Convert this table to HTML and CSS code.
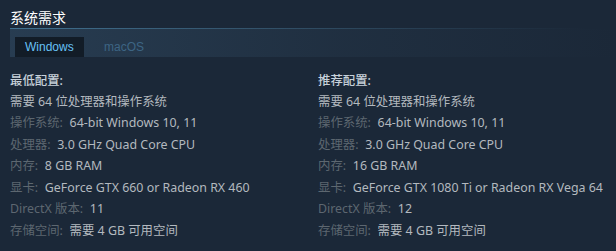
FILE: index.html
```html
<!DOCTYPE html>
<html lang="zh-CN">
<head>
<meta charset="utf-8">
<link rel="stylesheet" href="styles.css">
</head>
<body>
<div class="sysreq">
  <h2 class="title">系统需求</h2>
  <div class="tabs">
    <div class="tab active">Windows</div>
    <div class="tab">macOS</div>
  </div>
  <div class="cols">
    <div class="col">
      <div class="head">最低配置:</div>
      <ul>
        <li>需要 64 位处理器和操作系统</li>
        <li><span class="lb">操作系统:</span> 64-bit Windows 10, 11</li>
        <li><span class="lb">处理器:</span> 3.0 GHz Quad Core CPU</li>
        <li><span class="lb">内存:</span> 8 GB RAM</li>
        <li><span class="lb">显卡:</span> GeForce GTX 660 or Radeon RX 460</li>
        <li><span class="lb">DirectX 版本:</span> 11</li>
        <li><span class="lb">存储空间:</span> 需要 4 GB 可用空间</li>
      </ul>
    </div>
    <div class="col">
      <div class="head">推荐配置:</div>
      <ul>
        <li>需要 64 位处理器和操作系统</li>
        <li><span class="lb">操作系统:</span> 64-bit Windows 10, 11</li>
        <li><span class="lb">处理器:</span> 3.0 GHz Quad Core CPU</li>
        <li><span class="lb">内存:</span> 16 GB RAM</li>
        <li><span class="lb">显卡:</span> GeForce GTX 1080 Ti or Radeon RX Vega 64</li>
        <li><span class="lb">DirectX 版本:</span> 12</li>
        <li><span class="lb">存储空间:</span> 需要 4 GB 可用空间</li>
      </ul>
    </div>
  </div>
</div>
</body>
</html>
```
FILE: styles.css
```css
* { box-sizing: border-box; }
html, body {
  margin: 0;
  padding: 0;
  background: #1b2838;
}
body {
  font-family: "Noto Sans", "Noto Sans CJK SC", sans-serif;
  font-size: 12.4px;
  color: #acb2b8;
  width: 616px;
  height: 251px;
  overflow: hidden;
}
.sysreq {
  padding: 6px 0 0 10px;
}
.title {
  margin: 0;
  font-family: "Noto Sans CJK SC", sans-serif;
  font-size: 14px;
  font-weight: normal;
  color: #ffffff;
  line-height: 22px;
  height: 23px;
  border-bottom: 1px solid transparent;
  position: relative;
}
.title::after {
  content: "";
  position: absolute;
  left: 0;
  right: 0;
  bottom: -1px;
  height: 1px;
  background: linear-gradient(to right, #40708f 0%, #33536b 40%, rgba(27,40,56,0) 95%);
}
.tabs {
  display: flex;
  align-items: flex-end;
  height: 28px;
  padding-left: 5px;
  background: linear-gradient(to right, rgba(48,74,98,0.6) 0%, rgba(40,60,80,0.35) 55%, rgba(27,40,56,0) 100%);
}
.tab {
  height: 20px;
  line-height: 20px;
  padding: 0 10px;
  font-family: "Liberation Sans", Arial, sans-serif;
  font-size: 12px;
  color: #3d6584;
}
.tab.active {
  background: #121c27;
  color: #67c1f5;
  width: 69px;
  margin-right: 10px;
}
.cols {
  display: grid;
  grid-template-columns: 308px 1fr;
  margin-top: 16px;
}
.head {
  color: #c7d1da;
  line-height: 15px;
  height: 15px;
  margin-bottom: 5.5px;
  font-weight: 500;
}
ul {
  list-style: none;
  margin: 0;
  padding: 0;
}
li {
  line-height: 16px;
  margin-bottom: 5.6px;
  white-space: nowrap;
  color: #b3b9bf;
}
.lb {
  color: #5d6770;
  margin-right: 3.5px;
}
```
